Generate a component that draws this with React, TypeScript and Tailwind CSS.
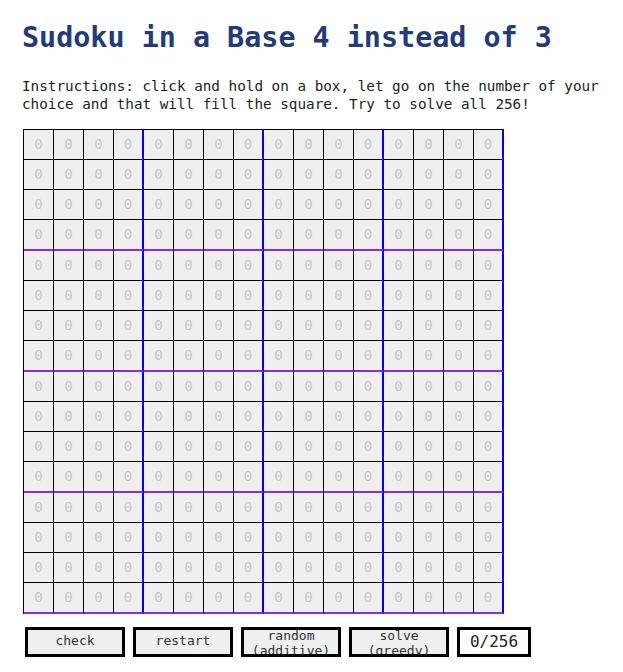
import { useState } from 'react';

const mono = { fontFamily: '"DejaVu Sans Mono", "Liberation Mono", monospace' };

const btn =
  'flex h-[30px] w-[100px] flex-col items-center overflow-hidden border-[3px] border-black bg-[#efefef] text-[13px] leading-[15px] text-[#333]';

export default function App() {
  const [cells] = useState<number[]>(() => Array(256).fill(0));
  const filled = cells.filter((c) => c !== 0).length;

  return (
    <div className="min-h-screen bg-white pl-[22px] pt-[20px] text-[#222]" style={mono}>
      {/* Title */}
      <h1 className="text-[28.4px] font-bold leading-[36px] text-[#243b7b]">
        Sudoku in a Base 4 instead of 3
      </h1>

      {/* Instructions */}
      <p className="mt-[21px] w-[600px] text-[14.3px] leading-[18px]">
        Instructions: click and hold on a box, let go on the number of your choice and that will fill the square. Try to solve all 256!
      </p>

      {/* Board */}
      <div className="mt-[16px] ml-[1px] grid w-[481px] grid-cols-[repeat(16,30px)] border-t border-l border-black">
        {cells.map((v, i) => {
          const blockRight = i % 16 % 4 === 3;
          const blockBottom = Math.floor(i / 16) % 4 === 3;
          return (
            <button
              key={i}
              className={
                'flex items-center justify-center bg-[#efefef] text-[14px] text-[#c8c8c8] ' +
                (blockRight ? 'border-r-2 border-r-[#0000ff] ' : 'border-r border-r-black ') +
                (blockBottom ? 'h-[31px] border-b-2 border-b-[#8a2be2]' : 'h-[30px] border-b border-b-black')
              }
            >
              {v}
            </button>
          );
        })}
      </div>

      {/* Controls */}
      <div className="mt-[13px] ml-[3px] flex gap-[8px]">
        <button className={btn + ' justify-center pb-[4px]'}>check</button>
        <button className={btn + ' justify-center pb-[4px]'}>restart</button>
        <button className={btn}>
          <span className="-mt-[2px]">random</span>
          <span>(additive)</span>
        </button>
        <button className={btn}>
          <span className="-mt-[2px]">solve</span>
          <span>(greedy)</span>
        </button>
        <div className="flex h-[30px] w-[74px] items-center justify-center border-[3px] border-black bg-white text-[16px] text-[#222]">
          {filled}/256
        </div>
      </div>
    </div>
  );
}
